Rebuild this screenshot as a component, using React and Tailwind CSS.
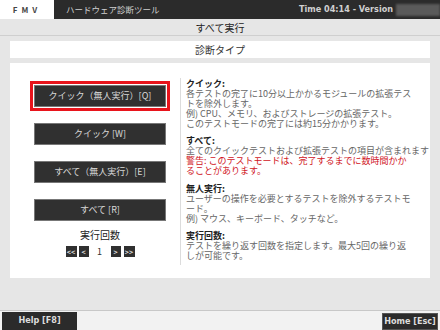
export default function App() {
    const jp = { fontFamily: '"Noto Sans CJK JP", "Noto Sans", sans-serif' }
    const narrow = { fontFamily: '"DejaVu Sans Condensed", "Liberation Sans", sans-serif' }

    const buttons = [
        { label: 'クイック（無人実行）[Q]', active: true },
        { label: 'クイック [W]' },
        { label: 'すべて（無人実行）[E]' },
        { label: 'すべて [R]' },
    ]

    return (
        <div className="w-[440px] h-[330px] bg-[#e6e6e6] flex flex-col overflow-hidden text-[#333]" style={jp}>
            {/* header */}
            <div className="flex h-[19px] shrink-0">
                <div className="w-[54px] bg-white flex items-center justify-center text-[8px] font-bold tracking-[4px] text-[#444]">
                    FMV
                </div>
                <div className="flex-1 bg-[#2b2b2b] flex items-center justify-between pl-[12px] text-[#d0d0d0]">
                    <span className="text-[8.5px]">ハードウェア診断ツール</span>
                    <div className="flex items-center h-full">
                        <span className="font-bold text-[9px]" style={narrow}>
                            Time 04:14 - Version
                        </span>
                        <span className="ml-[3px] w-[44px] h-[12px] bg-[#5a5a5a] blur-[1px]" />
                    </div>
                </div>
            </div>

            {/* title */}
            <div className="h-[17px] shrink-0 border-b border-[#cfcfcf] flex items-center justify-center text-[10px] text-[#222]">
                すべて実行
            </div>

            <div className="px-[10px] pt-[5px]">
                <div className="h-[17px] bg-white flex items-center justify-center text-[10px] text-[#333]">
                    診断タイプ
                </div>

                <div className="mt-[5px] h-[215px] bg-white flex">
                    {/* left column */}
                    <div className="w-[170px] shrink-0 flex flex-col items-center pl-[10px] pt-[22px]">
                        <div className="flex flex-col gap-[16px]">
                            {buttons.map((b) => (
                                <button
                                    key={b.label}
                                    className={
                                        'w-[132px] h-[22px] bg-[#303030] border border-[#777] text-[#d8d8d8] text-[9px] flex items-center justify-center ' +
                                        (b.active ? 'outline-[3px] outline-solid outline-[#e8141c] outline-offset-[1px]' : '')
                                    }
                                >
                                    {b.label}
                                </button>
                            ))}
                        </div>
                        <div className="mt-[8px] text-[10px] leading-[12px] text-[#222]">実行回数</div>
                        <div className="mt-[4px] flex items-center text-[7px] text-[#eee] font-bold">
                            <span className="w-[11px] h-[11px] bg-[#303030] flex items-center justify-center">&lt;&lt;</span>
                            <span className="ml-[2px] w-[10px] h-[11px] bg-[#303030] flex items-center justify-center">&lt;</span>
                            <span className="w-[22px] text-center text-[#333] font-normal text-[9px]">1</span>
                            <span className="w-[10px] h-[11px] bg-[#303030] flex items-center justify-center">&gt;</span>
                            <span className="ml-[3px] w-[11px] h-[11px] bg-[#303030] flex items-center justify-center">&gt;&gt;</span>
                        </div>
                    </div>

                    {/* divider */}
                    <div className="mt-[15px] h-[187px] w-px shrink-0 bg-[#dcdcdc]" />

                    {/* descriptions */}
                    <div className="flex-1 min-w-0 pl-[5px] pt-[16px] text-[9px] leading-[10px] text-[#666] whitespace-nowrap">
                        <div className="font-bold text-[#222]">クイック:</div>
                        <div>各テストの完了に10分以上かかるモジュールの拡張テス</div>
                        <div>トを除外します。</div>
                        <div>例) CPU、メモリ、およびストレージの拡張テスト。</div>
                        <div>このテストモードの完了には約15分かかります。</div>

                        <div className="mt-[7px] font-bold text-[#222]">すべて:</div>
                        <div>全てのクイックテストおよび拡張テストの項目が含まれます</div>
                        <div className="text-[#d0141c]">警告: このテストモードは、完了するまでに数時間かか</div>
                        <div className="text-[#d0141c]">ることがあります。</div>

                        <div className="mt-[8px] font-bold text-[#222]">無人実行:</div>
                        <div>ユーザーの操作を必要とするテストを除外するテストモ</div>
                        <div>ード。</div>
                        <div>例) マウス、キーボード、タッチなど。</div>

                        <div className="mt-[7px] font-bold text-[#222]">実行回数:</div>
                        <div>テストを繰り返す回数を指定します。最大5回の繰り返</div>
                        <div>しが可能です。</div>
                    </div>
                </div>
            </div>

            <div className="flex-1" />

            {/* footer */}
            <div className="h-[20px] shrink-0 border-t border-[#c8c8c8] bg-[#f2f2f2] flex items-end justify-between px-[2px]">
                <button className="w-[75px] h-[18px] bg-[#2b2b2b] text-[#ddd] text-[9px] font-bold flex items-center justify-center" style={narrow}>
                    Help [F8]
                </button>
                <button className="w-[56px] h-[17px] bg-[#2b2b2b] text-[#ddd] text-[9px] font-bold flex items-center justify-center border border-[#555]" style={narrow}>
                    Home [Esc]
                </button>
            </div>
        </div>
    )
}
